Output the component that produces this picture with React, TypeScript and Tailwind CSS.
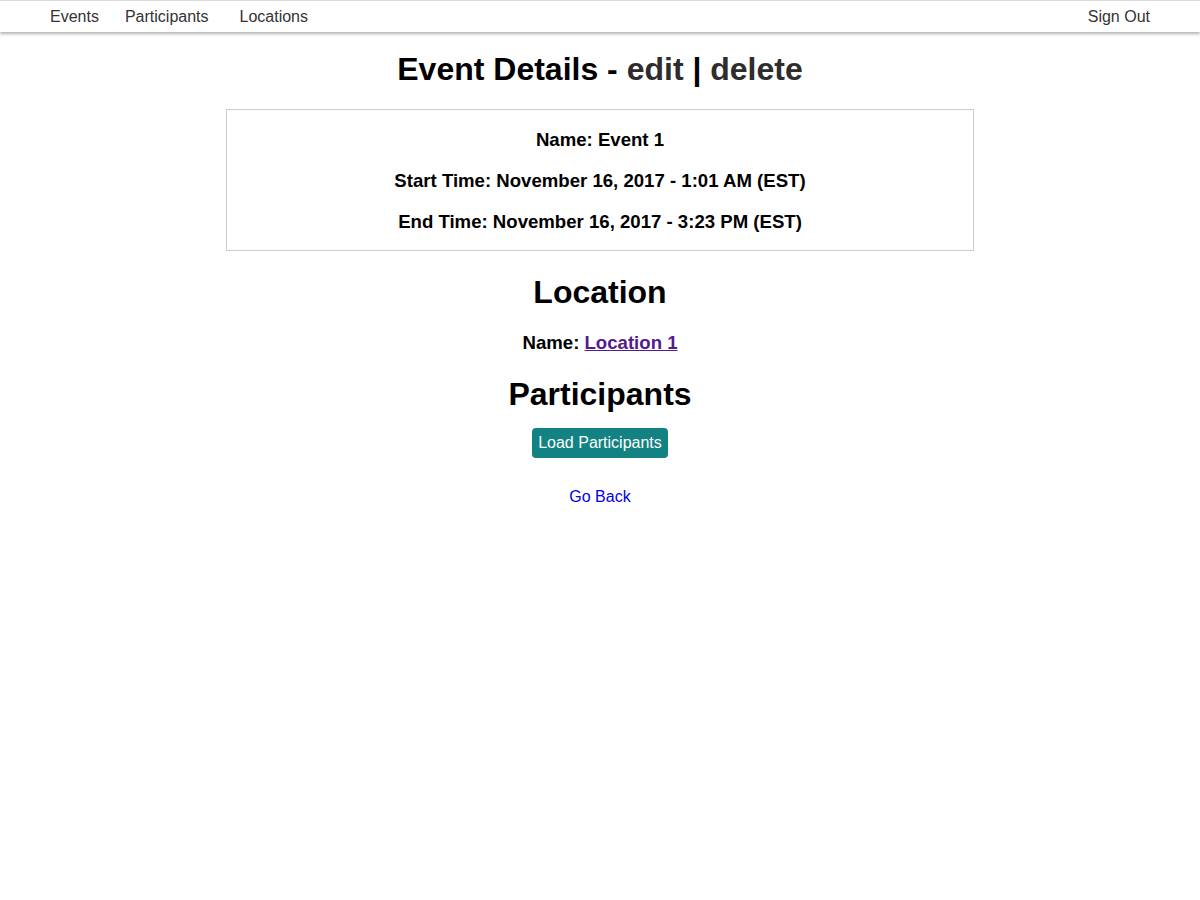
import { FC } from "react";

const Nav: FC = () => {
	return (
		<div className="flex items-center justify-between h-[32px] border-t border-[#dcdcdc] bg-white shadow-[0_2px_3px_rgba(0,0,0,0.3)] px-[50px] text-[16px] text-[#333]">
			<div className="flex items-center">
				<a href="#">Events</a>
				<a href="#" className="ml-[26px]">Participants</a>
				<a href="#" className="ml-[31px]">Locations</a>
			</div>
			<a href="#">Sign Out</a>
		</div>
	);
};

const App: FC = () => {
	return (
		<div className="min-h-[900px] bg-white text-black font-['Liberation_Sans',Arial,sans-serif]">
			<Nav />
			<div className="flex flex-col items-center">
				<h1 className="mt-[19px] text-[32px] leading-[37px] font-bold">
					Event Details - <a href="#" className="text-[#2d2d2d]">edit</a> |{" "}
					<a href="#" className="text-[#2d2d2d]">delete</a>
				</h1>
				<div className="mt-[21px] w-[748px] border border-[#cccccc] pt-[19px] pb-[18px] flex flex-col items-center gap-[20px] text-[18.6px] leading-[21px] font-bold">
					<p>Name: Event 1</p>
					<p>Start Time: November 16, 2017 - 1:01 AM (EST)</p>
					<p>End Time: November 16, 2017 - 3:23 PM (EST)</p>
				</div>
				<h2 className="mt-[23px] text-[32px] leading-[37px] font-bold">Location</h2>
				<p className="mt-[21px] text-[18.6px] leading-[21px] font-bold">
					Name: <a href="#" className="text-[#551a8b] underline">Location 1</a>
				</p>
				<h2 className="mt-[23px] text-[32px] leading-[37px] font-bold">Participants</h2>
				<button className="mt-[15px] h-[30px] px-[6px] rounded-[4px] bg-[#138282] text-white text-[16px]">
					Load Participants
				</button>
				<a href="#" className="mt-[30px] text-[16px] leading-[18px] text-[#0000ee]">Go Back</a>
			</div>
		</div>
	);
};

export default App;
